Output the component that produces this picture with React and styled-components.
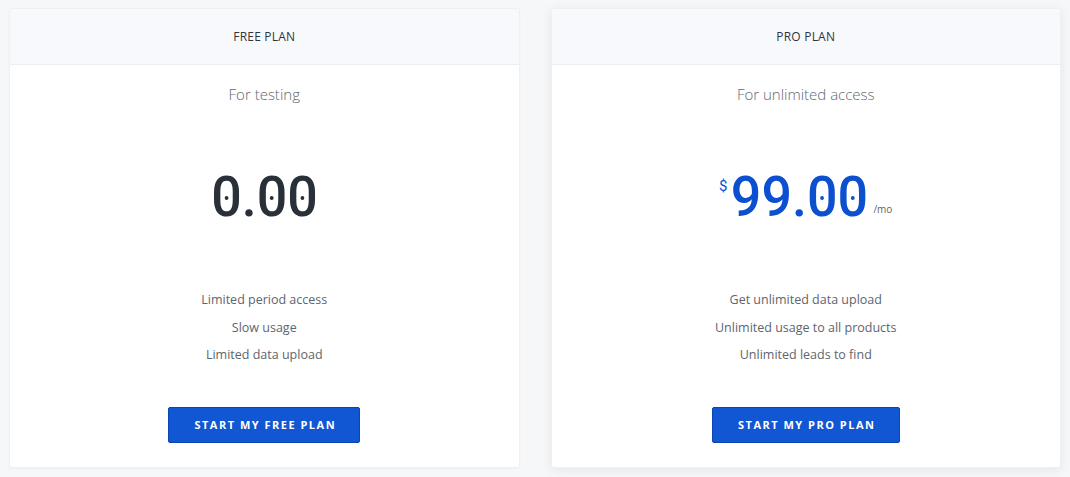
import React from 'react';
import styled, { createGlobalStyle } from 'styled-components';

// Global //
// -------//
const GlobalStyle = createGlobalStyle`
  html, body {
    margin: 0;
    padding: 0;
    background: #f6f7f8;
    font-family: "Open Sans", "Liberation Sans", sans-serif;
  }
`;

// Data //
// -----//
const plans = [
  {
    name: 'FREE PLAN',
    tagline: 'For testing',
    price: '0.00',
    currency: null,
    period: null,
    features: ['Limited period access', 'Slow usage', 'Limited data upload'],
    cta: 'START MY FREE PLAN',
    featured: false,
  },
  {
    name: 'PRO PLAN',
    tagline: 'For unlimited access',
    price: '99.00',
    currency: '$',
    period: '/mo',
    features: ['Get unlimited data upload', 'Unlimited usage to all products', 'Unlimited leads to find'],
    cta: 'START MY PRO PLAN',
    featured: true,
  },
];

// Styles //
// -------//
const Page = styled.div`
  display: flex;
  gap: 31px;
  padding: 8px 9px 9px;
`;

const Card = styled.div`
  flex: 1;
  height: 460px;
  display: flex;
  flex-direction: column;
  align-items: center;
  background: #ffffff;
  border: 1px solid #eef0f2;
  border-radius: 3px;
  box-sizing: border-box;
  box-shadow: ${(p) => (p.$featured ? '0 2px 12px rgba(0, 0, 0, 0.07)' : '0 1px 2px rgba(0, 0, 0, 0.03)')};
  overflow: hidden;
`;

const Header = styled.div`
  align-self: stretch;
  height: 55px;
  display: flex;
  align-items: center;
  justify-content: center;
  background: #f8f9fc;
  border-bottom: 1px solid #eceef1;
  font-size: 12px;
  font-weight: 500;
  color: #30353c;
  letter-spacing: 0.2px;
`;

const Tagline = styled.div`
  margin-top: 17px;
  font-size: 15px;
  line-height: 24px;
  font-weight: 300;
  color: #62676f;
`;

const PriceRow = styled.div`
  margin-top: 51px;
  height: 80px;
  display: flex;
  align-items: center;
  justify-content: center;
  color: ${(p) => (p.$featured ? '#0c50cf' : '#2a3039')};
`;

const Currency = styled.span`
  align-self: flex-start;
  margin-top: 20px;
  margin-right: 2px;
  font-family: Roboto, "Liberation Sans", sans-serif;
  font-size: 15px;
`;

const Amount = styled.span`
  font-family: Roboto, "Liberation Sans", sans-serif;
  font-size: 56px;
  line-height: 80px;
  font-weight: 500;
  letter-spacing: 0;
  display: inline-block;
  transform: scaleX(0.96);
  margin: 0 -2px;
`;

const Zero = styled.span`
  position: relative;
  &::after {
    content: '';
    position: absolute;
    left: 50%;
    top: 50%;
    width: 4px;
    height: 4px;
    margin: -1px 0 0 -2px;
    border-radius: 50%;
    background: currentColor;
  }
`;

const Period = styled.span`
  align-self: flex-end;
  margin-bottom: 21px;
  margin-left: 5px;
  font-size: 10px;
  color: #60656d;
`;

const Features = styled.ul`
  margin: 49px 0 0;
  padding: 0;
  list-style: none;
  text-align: center;
`;

const Feature = styled.li`
  font-size: 12.5px;
  line-height: 27.5px;
  color: #60656d;
`;

const Button = styled.button`
  margin-top: 38px;
  height: 36px;
  padding: 0 23px 0 25px;
  border: 1px solid #0b45b2;
  border-radius: 2px;
  background: #1156d2;
  color: #ffffff;
  font-family: "Open Sans", "Liberation Sans", sans-serif;
  font-size: 11px;
  font-weight: 700;
  letter-spacing: 1.5px;
  cursor: pointer;
`;

// Components //
// -----------//
function Price({ value }) {
  return (
    <Amount>
      {value.split('').map((ch, i) => (ch === '0' ? <Zero key={i}>0</Zero> : <span key={i}>{ch}</span>))}
    </Amount>
  );
}

function PlanCard({ plan }) {
  return (
    <Card $featured={plan.featured}>
      <Header>{plan.name}</Header>
      <Tagline>{plan.tagline}</Tagline>
      <PriceRow $featured={plan.featured}>
        {plan.currency && <Currency>{plan.currency}</Currency>}
        <Price value={plan.price} />
        {plan.period && <Period>{plan.period}</Period>}
      </PriceRow>
      <Features>
        {plan.features.map((f) => (
          <Feature key={f}>{f}</Feature>
        ))}
      </Features>
      <Button>{plan.cta}</Button>
    </Card>
  );
}

export default function App() {
  return (
    <>
      <GlobalStyle />
      <Page>
        {plans.map((p) => (
          <PlanCard key={p.name} plan={p} />
        ))}
      </Page>
    </>
  );
}
